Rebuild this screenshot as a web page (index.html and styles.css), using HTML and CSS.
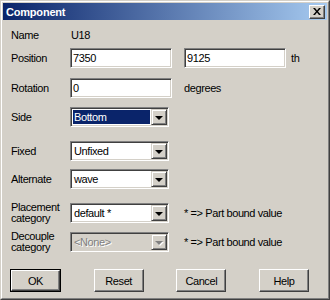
FILE: index.html
```html
<!DOCTYPE html>
<html>
<head>
<meta charset="utf-8">
<link rel="stylesheet" href="styles.css">
</head>
<body>
<div class="window">
  <div class="frame">
    <div class="titlebar">
      <span class="title">Component</span>
      <span class="close"><svg width="8" height="7" viewBox="0 0 8 7"><path d="M0 0h2l2 2.5L6 0h2L5 3.5 8 7H6L4 4.5 2 7H0l3-3.5z" fill="#000"/></svg></span>
    </div>
    <div class="body">
      <div class="row row-name"><span class="label">Name</span><span class="value">U18</span></div>
      <div class="row mt6"><span class="label">Position</span><div class="input">7350</div><div class="extra"><div class="input">9125</div><span class="unit">th</span></div></div>
      <div class="row mt10"><span class="label">Rotation</span><div class="input">0</div><span class="note">degrees</span></div>
      <div class="row mt9"><span class="label">Side</span><div class="select"><span class="sel-text selected">Bottom</span><span class="sel-btn"><i class="tri"></i></span></div></div>
      <div class="row mt14"><span class="label">Fixed</span><div class="select"><span class="sel-text">Unfixed</span><span class="sel-btn"><i class="tri"></i></span></div></div>
      <div class="row mt8"><span class="label">Alternate</span><div class="select"><span class="sel-text">wave</span><span class="sel-btn"><i class="tri"></i></span></div></div>
      <div class="row mt13"><span class="label two">Placement<br>category</span><div class="select"><span class="sel-text">default *</span><span class="sel-btn"><i class="tri"></i></span></div><span class="note">* =&gt; Part bound value</span></div>
      <div class="row mt9"><span class="label two">Decouple<br>category</span><div class="select disabled"><span class="sel-text">&lt;None&gt;</span><span class="sel-btn"><i class="tri"></i></span></div><span class="note">* =&gt; Part bound value</span></div>
      <div class="buttons">
        <span class="btn default"><span class="btn-in">OK</span></span>
        <span class="btn"><span class="btn-in">Reset</span></span>
        <span class="btn"><span class="btn-in">Cancel</span></span>
        <span class="btn"><span class="btn-in">Help</span></span>
      </div>
    </div>
  </div>
</div>
</body>
</html>
```
FILE: styles.css
```css
* { box-sizing: border-box; }
html, body { margin: 0; padding: 0; }
body {
  width: 330px;
  height: 300px;
  font-family: "Liberation Sans", Arial, sans-serif;
  font-size: 11px;
  letter-spacing: -0.4px;
  color: #000;
  background: #d4d0c8;
}
.window {
  width: 330px;
  height: 300px;
  border: 1px solid;
  border-color: #d4d0c8 #404040 #404040 #d4d0c8;
  background: #d4d0c8;
}
.frame {
  height: 100%;
  border: 1px solid;
  border-color: #fff #808080 #808080 #fff;
  padding: 1px;
  display: flex;
  flex-direction: column;
}
.titlebar {
  height: 17px;
  flex: none;
  display: flex;
  align-items: center;
  justify-content: space-between;
  padding: 0 2px 0 2px;
  background: linear-gradient(to right, #0a246a, #a6caf0);
}
.title {
  color: #fff;
  font-weight: bold;
  font-size: 11px;
  letter-spacing: -0.2px;
  padding-left: 1px;
}
.close {
  width: 16px;
  height: 14px;
  display: flex;
  align-items: center;
  justify-content: center;
  background: #d4d0c8;
  border: 1px solid;
  border-color: #fff #404040 #404040 #fff;
  box-shadow: inset -1px -1px #808080;
}
.body {
  flex: 1;
  padding: 8px 18px 0 7px;
  display: flex;
  flex-direction: column;
}
.row {
  display: grid;
  grid-template-columns: 60px 114px auto;
  align-items: center;
  height: 20px;
}
.row-name { height: 14px; }
.mt6 { margin-top: 6px; }
.mt8 { margin-top: 8px; }
.mt9 { margin-top: 9px; }
.mt10 { margin-top: 10px; }
.mt13 { margin-top: 13px; }
.mt14 { margin-top: 14px; }
.label { padding-left: 1px; white-space: nowrap; }
.label.two { line-height: 11px; }
.value { padding-left: 1px; }
.extra { display: flex; align-items: center; }
.unit { margin-left: 5px; }
.input {
  width: 102px;
  height: 20px;
  background: #fff;
  border: 1px solid;
  border-color: #808080 #fff #fff #808080;
  box-shadow: inset 1px 1px #404040, inset -1px -1px #d4d0c8;
  padding: 0 2px;
  line-height: 18px;
}
.select {
  width: 99px;
  height: 20px;
  display: flex;
  background: #fff;
  border: 1px solid;
  border-color: #808080 #fff #fff #808080;
  box-shadow: inset 1px 1px #404040, inset -1px -1px #d4d0c8;
  padding: 1px;
}
.sel-text {
  flex: 1;
  line-height: 16px;
  padding-left: 2px;
  white-space: nowrap;
  overflow: hidden;
}
.sel-text.selected {
  background: #0a246a;
  color: #fff;
  margin: 1px;
  line-height: 14px;
  padding-left: 1px;
}
.sel-btn {
  width: 16px;
  height: 16px;
  flex: none;
  display: flex;
  align-items: center;
  justify-content: center;
  background: #d4d0c8;
  border: 1px solid;
  border-color: #d4d0c8 #404040 #404040 #d4d0c8;
  box-shadow: inset 1px 1px #fff, inset -1px -1px #808080;
}
.tri {
  width: 0;
  height: 0;
  border-left: 4px solid transparent;
  border-right: 4px solid transparent;
  border-top: 4px solid #000;
  margin-top: 1px;
}
.select.disabled { background: #d4d0c8; }
.select.disabled .sel-text { color: #808080; text-shadow: 1px 1px #fff; }
.select.disabled .tri { border-top-color: #808080; filter: drop-shadow(1px 1px 0 #fff); }
.note { white-space: nowrap; }
.buttons {
  margin-top: 18px;
  display: flex;
  justify-content: space-between;
}
.btn {
  width: 50px;
  height: 23px;
  display: flex;
  background: #d4d0c8;
  border: 1px solid;
  border-color: #fff #404040 #404040 #fff;
  box-shadow: inset -1px -1px #808080;
}
.btn.default {
  width: 51px;
  border-color: #000;
}
.btn-in {
  flex: 1;
  display: flex;
  align-items: center;
  justify-content: center;
}
.btn.default .btn-in {
  border: 1px solid;
  border-color: #fff #404040 #404040 #fff;
  box-shadow: inset -1px -1px #808080;
}
```
